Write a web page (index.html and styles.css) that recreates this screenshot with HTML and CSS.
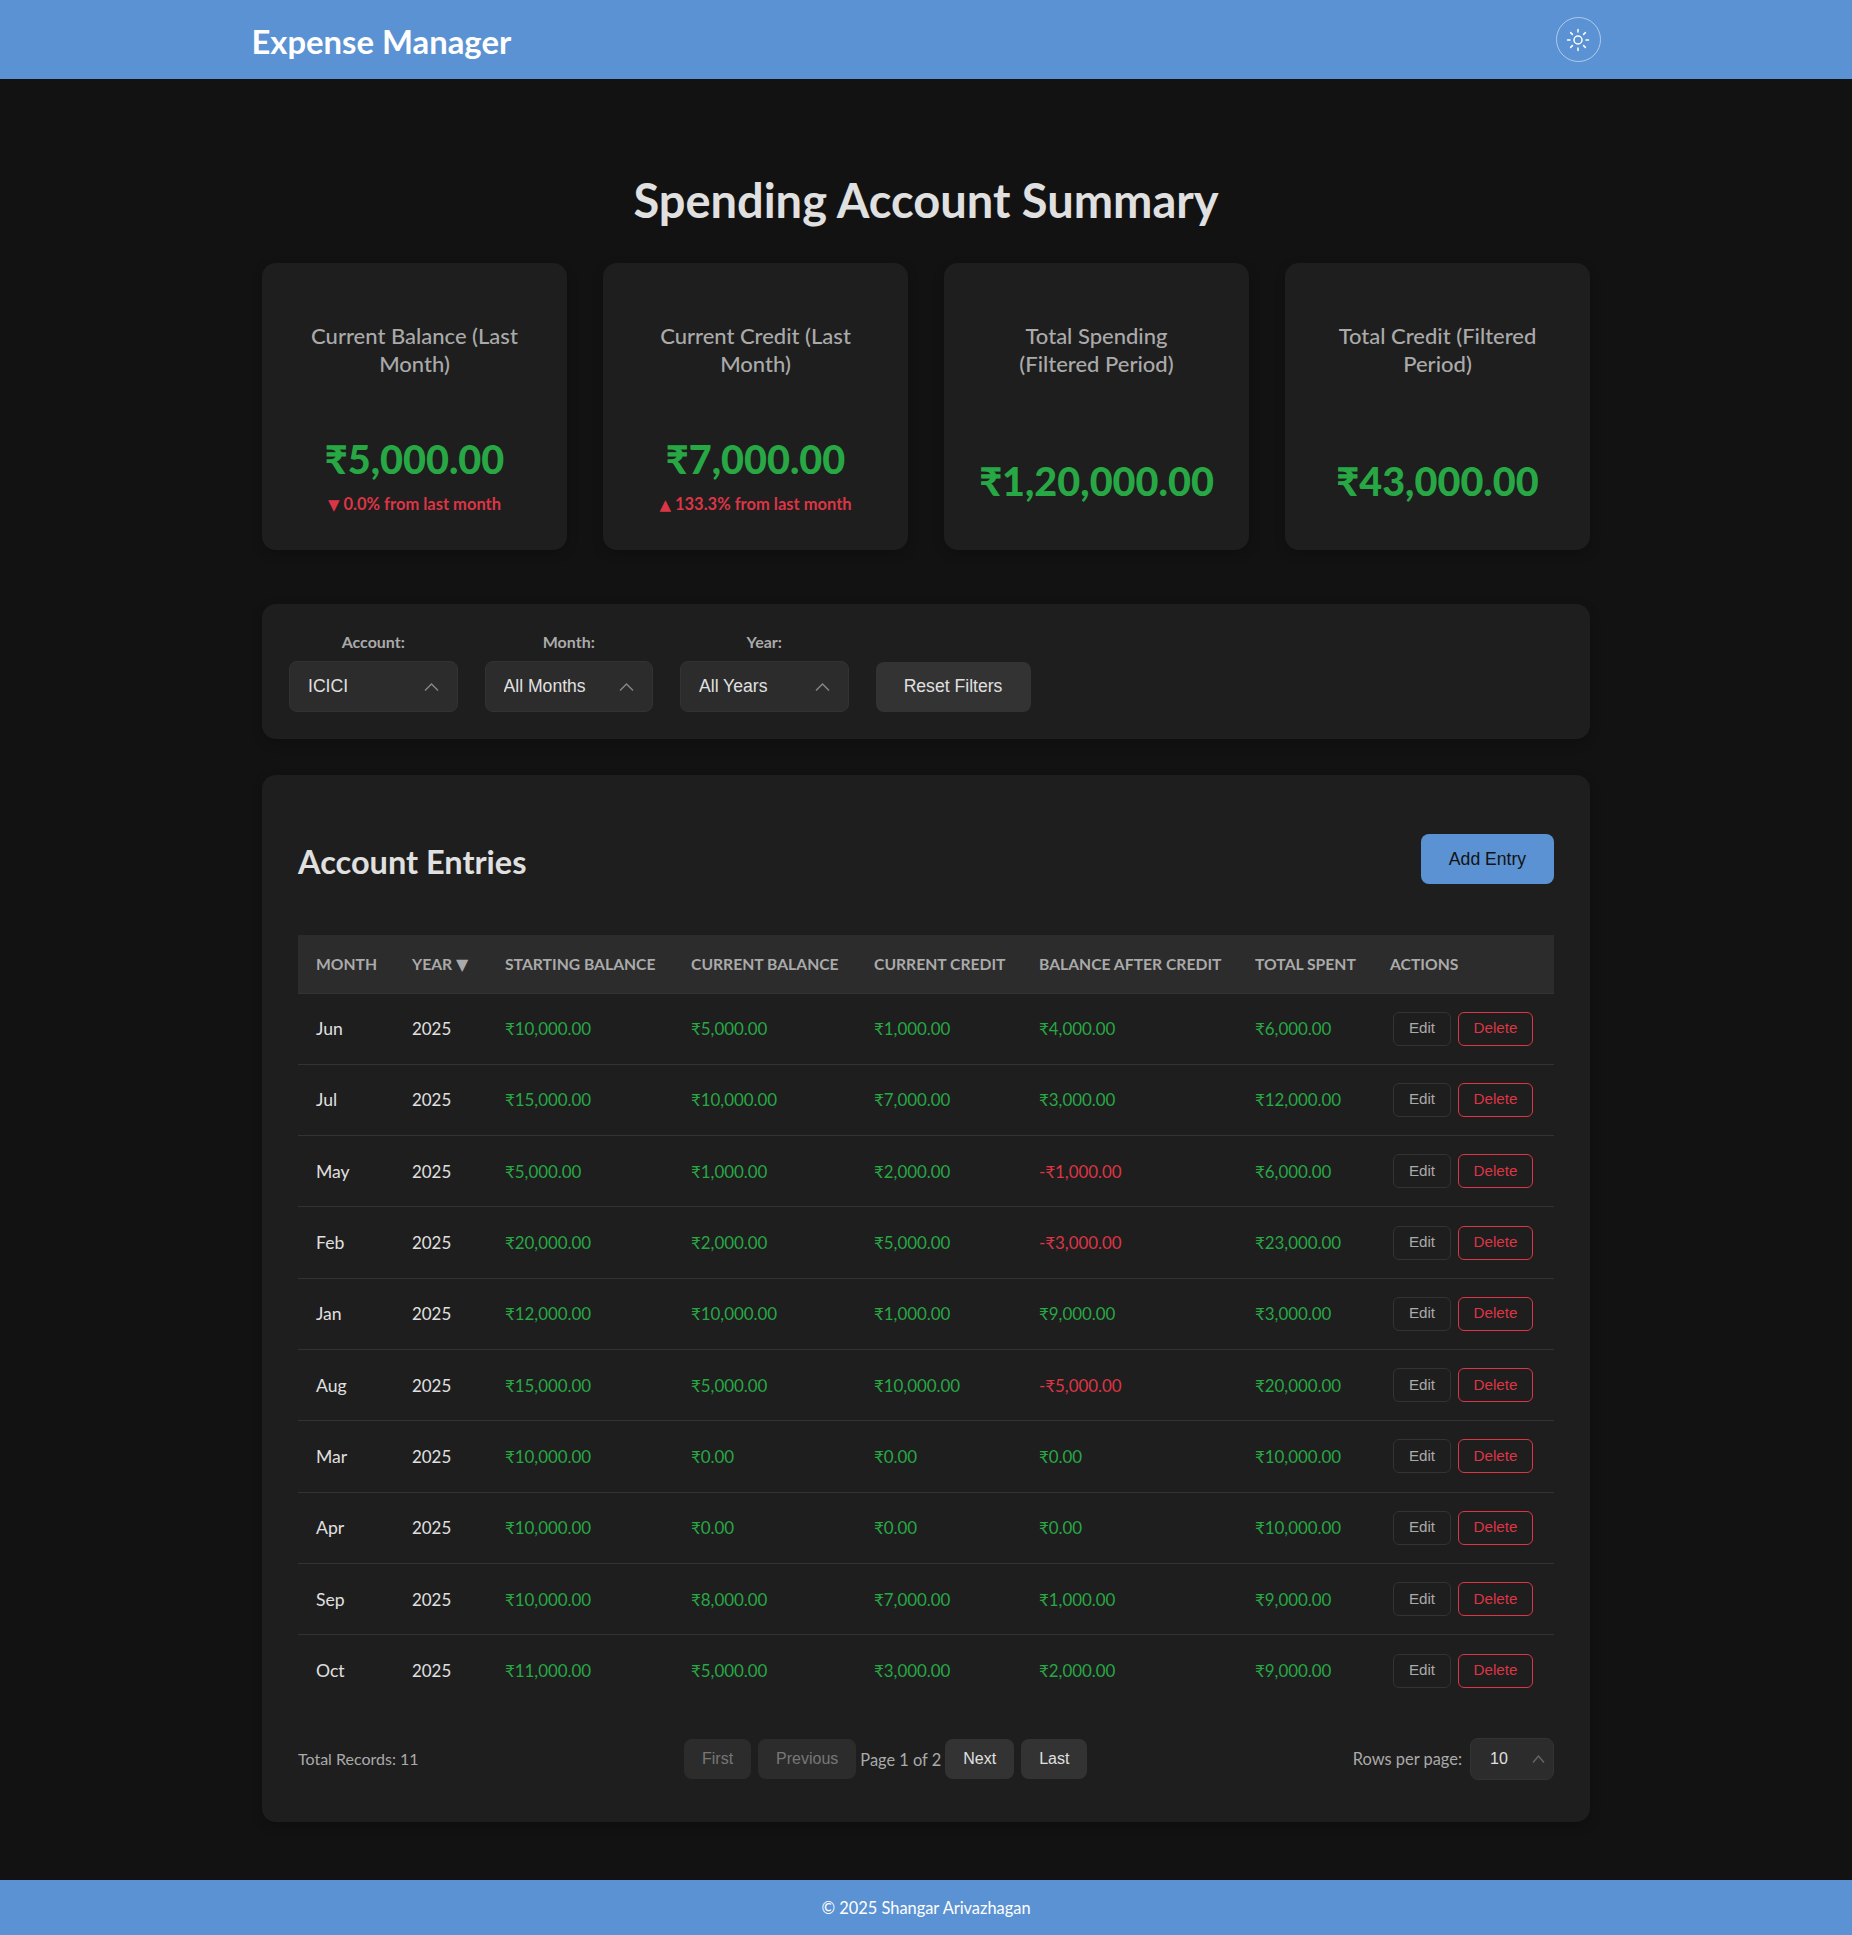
FILE: index.html
```html
<!DOCTYPE html>
<html lang="en">
<head>
    <meta charset="UTF-8">
    <meta name="viewport" content="width=device-width, initial-scale=1.0">
    <title>Expense Manager</title>
    <link rel="stylesheet" href="styles.css">
</head>
<body>
    <header class="site-header">
        <div class="header-inner">
            <div class="brand">Expense Manager</div>
            <button class="theme-toggle" aria-label="Toggle theme">
                <svg width="24" height="24" viewBox="0 0 24 24" fill="none" stroke="#fff" stroke-width="1.5" stroke-linecap="round">
                    <circle cx="12" cy="12" r="4"/>
                    <path d="M12 1.5v2.5M12 20v2.5M1.5 12H4M20 12h2.5M4.6 4.6l1.8 1.8M17.6 17.6l1.8 1.8M4.6 19.4l1.8-1.8M17.6 6.4l1.8-1.8"/>
                </svg>
            </button>
        </div>
    </header>

    <main class="content">
        <h1 class="page-title">Spending Account Summary</h1>

        <section class="summary-cards">
            <div class="card">
                <h3 class="card-title">Current Balance (Last Month)</h3>
                <div class="card-value">₹5,000.00</div>
                <div class="card-change"><span class="arrow">▼</span> 0.0% from last month</div>
            </div>
            <div class="card">
                <h3 class="card-title">Current Credit (Last Month)</h3>
                <div class="card-value">₹7,000.00</div>
                <div class="card-change"><span class="arrow">▲</span> 133.3% from last month</div>
            </div>
            <div class="card">
                <h3 class="card-title">Total Spending (Filtered Period)</h3>
                <div class="card-value">₹1,20,000.00</div>
            </div>
            <div class="card">
                <h3 class="card-title">Total Credit (Filtered Period)</h3>
                <div class="card-value">₹43,000.00</div>
            </div>
        </section>

        <section class="filters">
            <div class="filter">
                <label for="account">Account:</label>
                <div class="select-wrap">
                    <select id="account"><option>ICICI</option></select>
                    <svg class="chevron" width="15" height="8" viewBox="0 0 15 8" fill="none" stroke="#888" stroke-width="1.4"><path d="M1 7.5 7.5 1 14 7.5"/></svg>
                </div>
            </div>
            <div class="filter">
                <label for="month">Month:</label>
                <div class="select-wrap">
                    <select id="month"><option>All Months</option></select>
                    <svg class="chevron" width="15" height="8" viewBox="0 0 15 8" fill="none" stroke="#888" stroke-width="1.4"><path d="M1 7.5 7.5 1 14 7.5"/></svg>
                </div>
            </div>
            <div class="filter">
                <label for="year">Year:</label>
                <div class="select-wrap">
                    <select id="year"><option>All Years</option></select>
                    <svg class="chevron" width="15" height="8" viewBox="0 0 15 8" fill="none" stroke="#888" stroke-width="1.4"><path d="M1 7.5 7.5 1 14 7.5"/></svg>
                </div>
            </div>
            <button class="btn-reset">Reset Filters</button>
        </section>

        <section class="entries">
            <div class="entries-head">
                <h2>Account Entries</h2>
                <button class="btn-add">Add Entry</button>
            </div>

            <table class="entries-table">
                <thead>
                    <tr>
                        <th>Month</th>
                        <th>Year <span class="sort">▼</span></th>
                        <th>Starting Balance</th>
                        <th>Current Balance</th>
                        <th>Current Credit</th>
                        <th>Balance After Credit</th>
                        <th>Total Spent</th>
                        <th>Actions</th>
                    </tr>
                </thead>
                <tbody>
                    <tr><td>Jun</td><td>2025</td><td class="pos">₹10,000.00</td><td class="pos">₹5,000.00</td><td class="pos">₹1,000.00</td><td class="pos">₹4,000.00</td><td class="pos">₹6,000.00</td><td class="actions"><button class="btn-edit">Edit</button><button class="btn-delete">Delete</button></td></tr>
                    <tr><td>Jul</td><td>2025</td><td class="pos">₹15,000.00</td><td class="pos">₹10,000.00</td><td class="pos">₹7,000.00</td><td class="pos">₹3,000.00</td><td class="pos">₹12,000.00</td><td class="actions"><button class="btn-edit">Edit</button><button class="btn-delete">Delete</button></td></tr>
                    <tr><td>May</td><td>2025</td><td class="pos">₹5,000.00</td><td class="pos">₹1,000.00</td><td class="pos">₹2,000.00</td><td class="neg">-₹1,000.00</td><td class="pos">₹6,000.00</td><td class="actions"><button class="btn-edit">Edit</button><button class="btn-delete">Delete</button></td></tr>
                    <tr><td>Feb</td><td>2025</td><td class="pos">₹20,000.00</td><td class="pos">₹2,000.00</td><td class="pos">₹5,000.00</td><td class="neg">-₹3,000.00</td><td class="pos">₹23,000.00</td><td class="actions"><button class="btn-edit">Edit</button><button class="btn-delete">Delete</button></td></tr>
                    <tr><td>Jan</td><td>2025</td><td class="pos">₹12,000.00</td><td class="pos">₹10,000.00</td><td class="pos">₹1,000.00</td><td class="pos">₹9,000.00</td><td class="pos">₹3,000.00</td><td class="actions"><button class="btn-edit">Edit</button><button class="btn-delete">Delete</button></td></tr>
                    <tr><td>Aug</td><td>2025</td><td class="pos">₹15,000.00</td><td class="pos">₹5,000.00</td><td class="pos">₹10,000.00</td><td class="neg">-₹5,000.00</td><td class="pos">₹20,000.00</td><td class="actions"><button class="btn-edit">Edit</button><button class="btn-delete">Delete</button></td></tr>
                    <tr><td>Mar</td><td>2025</td><td class="pos">₹10,000.00</td><td class="pos">₹0.00</td><td class="pos">₹0.00</td><td class="pos">₹0.00</td><td class="pos">₹10,000.00</td><td class="actions"><button class="btn-edit">Edit</button><button class="btn-delete">Delete</button></td></tr>
                    <tr><td>Apr</td><td>2025</td><td class="pos">₹10,000.00</td><td class="pos">₹0.00</td><td class="pos">₹0.00</td><td class="pos">₹0.00</td><td class="pos">₹10,000.00</td><td class="actions"><button class="btn-edit">Edit</button><button class="btn-delete">Delete</button></td></tr>
                    <tr><td>Sep</td><td>2025</td><td class="pos">₹10,000.00</td><td class="pos">₹8,000.00</td><td class="pos">₹7,000.00</td><td class="pos">₹1,000.00</td><td class="pos">₹9,000.00</td><td class="actions"><button class="btn-edit">Edit</button><button class="btn-delete">Delete</button></td></tr>
                    <tr><td>Oct</td><td>2025</td><td class="pos">₹11,000.00</td><td class="pos">₹5,000.00</td><td class="pos">₹3,000.00</td><td class="pos">₹2,000.00</td><td class="pos">₹9,000.00</td><td class="actions"><button class="btn-edit">Edit</button><button class="btn-delete">Delete</button></td></tr>
                </tbody>
            </table>

            <div class="table-footer">
                <span class="muted">Total Records: 11</span>
                <div class="pagination">
                    <button class="page-btn" disabled>First</button>
                    <button class="page-btn prev" disabled>Previous</button>
                    <span class="muted page-info">Page 1 of 2</span>
                    <button class="page-btn">Next</button>
                    <button class="page-btn">Last</button>
                </div>
                <div class="rows-per-page">
                    <label class="muted" for="rows">Rows per page:</label>
                    <div class="select-wrap small">
                        <select id="rows"><option>10</option></select>
                        <svg class="chevron" width="13" height="8" viewBox="0 0 13 8" fill="none" stroke="#666" stroke-width="1.4"><path d="M1 7.5 6.5 1 12 7.5"/></svg>
                    </div>
                </div>
            </div>
        </section>
    </main>

    <footer class="site-footer">© 2025 Shangar Arivazhagan</footer>
</body>
</html>
```

FILE: styles.css
```css
* {
    box-sizing: border-box;
}
body {
    font-family: Lato, "Noto Sans", sans-serif;
    background-color: #121212;
    color: #e0e0e0;
    margin: 0;
    min-height: 100vh;
    display: flex;
    flex-direction: column;
}
button, select {
    font-family: "Liberation Sans", Arial, sans-serif;
}

/* header */
.site-header {
    background: #5b92d3;
    height: 79px;
    flex-shrink: 0;
}
.header-inner {
    max-width: 1349px;
    height: 100%;
    margin: 0 auto;
    display: flex;
    justify-content: space-between;
    align-items: center;
}
.brand {
    font-size: 32.8px;
    font-weight: 700;
    color: #fff;
    padding-top: 3px;
}
.theme-toggle {
    width: 45px;
    height: 45px;
    padding: 0;
    border: 1px solid rgba(255, 255, 255, 0.5);
    border-radius: 50%;
    background: transparent;
    display: flex;
    align-items: center;
    justify-content: center;
}

/* main */
.content {
    width: 1328px;
    margin: 0 auto;
    flex: 1;
    padding-bottom: 57px;
}
.page-title {
    font-size: 47px;
    font-weight: 700;
    line-height: 60px;
    text-align: center;
    margin: 91px 0 33px;
}

/* summary */
.summary-cards {
    display: grid;
    grid-template-columns: repeat(4, 1fr);
    gap: 36px;
    margin-bottom: 54px;
}
.card {
    background: #1e1e1e;
    border-radius: 14px;
    box-shadow: 0 4px 12px rgba(0, 0, 0, 0.2);
    min-height: 287px;
    padding: 59px 40px 34px;
    text-align: center;
    display: flex;
    flex-direction: column;
}
.card-title {
    margin: 0;
    font-size: 22px;
    font-weight: 500;
    line-height: 28px;
    color: #aaa;
}
.card-value {
    margin: auto -30px 8px;
    font-size: 39.6px;
    font-weight: 900;
    line-height: 54px;
    color: #28a745;
}
.card-change {
    font-size: 16.5px;
    font-weight: 700;
    line-height: 21px;
    white-space: nowrap;
    color: #dc3545;
}
.arrow {
    font-family: "DejaVu Sans", sans-serif;
    font-size: 15px;
}

/* filters */
.filters {
    background: #1e1e1e;
    border-radius: 14px;
    box-shadow: 0 4px 12px rgba(0, 0, 0, 0.2);
    height: 135px;
    padding: 27px;
    display: flex;
    align-items: flex-end;
    gap: 27px;
    margin-bottom: 36px;
}
.filter {
    width: 168.5px;
    display: flex;
    flex-direction: column;
    text-align: center;
}
.filter label {
    font-size: 16px;
    font-weight: 700;
    line-height: 20px;
    color: #aaa;
    margin-bottom: 9px;
}
.select-wrap {
    position: relative;
}
.select-wrap select {
    appearance: none;
    width: 100%;
    height: 51px;
    padding: 0 18px 2px;
    font-size: 17.6px;
    color: #e0e0e0;
    background: #2c2c2c;
    border: 1px solid #333;
    border-radius: 8px;
}
.chevron {
    position: absolute;
    right: 19px;
    top: 22px;
    pointer-events: none;
}
.btn-reset {
    width: 155px;
    height: 50px;
    padding: 0 0 2px;
    font-size: 17.6px;
    color: #e0e0e0;
    background: #333;
    border: none;
    border-radius: 8px;
}

/* entries */
.entries {
    background: #1e1e1e;
    border-radius: 14px;
    box-shadow: 0 4px 12px rgba(0, 0, 0, 0.2);
    padding: 59px 36px 42px;
}
.entries-head {
    display: flex;
    justify-content: space-between;
    align-items: center;
    margin-bottom: 51px;
}
.entries-head h2 {
    margin: 0;
    font-size: 32.5px;
    font-weight: 700;
    padding-top: 4px;
}
.btn-add {
    width: 133px;
    height: 50px;
    font-size: 17.6px;
    color: #121212;
    background: #5b92d3;
    border: none;
    border-radius: 8px;
}
.entries-table {
    width: 100%;
    border-collapse: collapse;
    table-layout: fixed;
}
.entries-table th {
    height: 58px;
    padding: 0 18px;
    text-align: left;
    font-size: 15.7px;
    font-weight: 700;
    text-transform: uppercase;
    white-space: nowrap;
    color: #aaa;
    background: #2c2c2c;
    border-bottom: 1px solid #333;
}
.entries-table th:nth-child(1) { width: 96px; }
.entries-table th:nth-child(2) { width: 93px; }
.entries-table th:nth-child(3) { width: 186px; }
.entries-table th:nth-child(4) { width: 183px; }
.entries-table th:nth-child(5) { width: 165px; }
.entries-table th:nth-child(6) { width: 216px; }
.entries-table th:nth-child(7) { width: 135px; }
.entries-table td {
    height: 71.3px;
    padding: 0 18px;
    font-size: 16.9px;
    white-space: nowrap;
    border-bottom: 1px solid #333;
}
.entries-table td:first-child {
    font-size: 17.6px;
}
.entries-table tbody tr:last-child td {
    border-bottom: none;
}
.sort {
    font-family: "DejaVu Sans", sans-serif;
    font-size: 16px;
    line-height: 0;
}
.entries-table td.pos {
    color: #28a745;
}
.entries-table td.neg {
    color: #dc3545;
}
.entries-table td.actions {
    padding-left: 21px;
    padding-right: 0;
}
.actions button {
    height: 34px;
    padding: 0 0 2px;
    font-size: 15.2px;
    background: transparent;
    border-radius: 6px;
}
.btn-edit {
    width: 58px;
    color: #aaa;
    border: 1px solid #333;
    margin-right: 7px;
}
.btn-delete {
    width: 75px;
    color: #dc3545;
    border: 1px solid #dc3545;
}

/* table footer */
.table-footer {
    display: flex;
    justify-content: space-between;
    align-items: center;
    margin-top: 32px;
}
.muted {
    font-size: 16px;
    color: #aaa;
}
.pagination {
    display: flex;
    align-items: center;
    gap: 7px;
}
.page-info {
    font-size: 16.4px;
    margin: 0 -3px 0 -3px;
    padding-top: 2px;
}
.page-btn {
    height: 40px;
    padding: 0 18px;
    font-size: 16px;
    color: #e0e0e0;
    background: #333;
    border: none;
    border-radius: 8px;
}
.page-btn:disabled {
    color: #777;
    background: #2c2c2c;
}
.rows-per-page {
    display: flex;
    align-items: center;
    gap: 8px;
}
.rows-per-page label {
    font-size: 16.4px;
}
.small {
    width: 84px;
}
.select-wrap.small select {
    height: 42px;
    padding: 0 19px;
    font-size: 16px;
}
.small .chevron {
    right: 9px;
    top: 17px;
}

/* footer */
.site-footer {
    background: #5b92d3;
    height: 55px;
    flex-shrink: 0;
    display: flex;
    align-items: center;
    justify-content: center;
    padding-bottom: 1px;
    font-size: 16.4px;
    color: #fff;
}
```
